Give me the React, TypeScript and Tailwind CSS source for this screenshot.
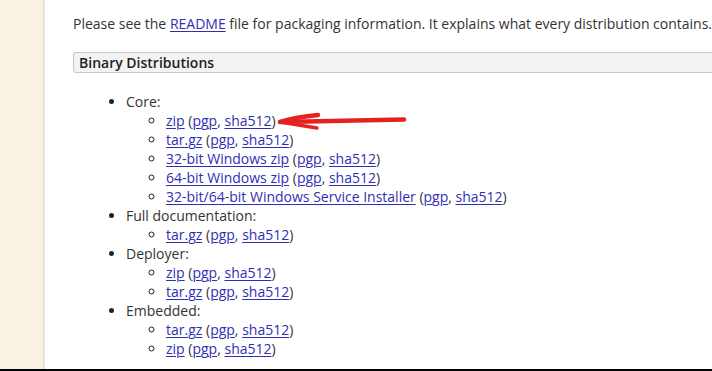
import React from 'react'

const L = ({ children }: { children: React.ReactNode }) => (
  <a href="#" className="text-[#2f2fb4] underline underline-offset-2 decoration-1">
    {children}
  </a>
)

function Sigs() {
  return (
    <>
      {' '}(<L>pgp</L>, <L>sha512</L>)
    </>
  )
}

const groups: { name: string; items: string[] }[] = [
  {
    name: 'Core:',
    items: ['zip', 'tar.gz', '32-bit Windows zip', '64-bit Windows zip', '32-bit/64-bit Windows Service Installer'],
  },
  { name: 'Full documentation:', items: ['tar.gz'] },
  { name: 'Deployer:', items: ['zip', 'tar.gz'] },
  { name: 'Embedded:', items: ['tar.gz', 'zip'] },
]

export default function App() {
  return (
    <div
      className="relative flex h-[371px] w-[712px] overflow-hidden bg-white text-[14px] text-[#333]"
      style={{ fontFamily: '"Open Sans", sans-serif' }}
    >
      <div className="w-[43px] shrink-0 bg-[#f8f1e4]" />
      <div className="w-[2px] shrink-0 bg-gradient-to-r from-[#d9d4cc] to-[#f3f3f3]" />
      <div className="flex-1 pl-[28px] pt-[13px]">
        <p className="leading-[22px] whitespace-nowrap">
          Please see the <L>README</L> file for packaging information. It explains what every distribution contains.
        </p>
        <div className="mt-[17px] -mr-[10px] h-[21px] rounded-l-[3px] border border-r-0 border-[#c8c8c8] bg-[#f3f3f3] pl-[5px] text-[14px] font-semibold leading-[19px] text-[#222]">
          Binary Distributions
        </div>
        <ul className="mt-[19px] list-disc pl-[53px] leading-[19px] marker:text-[#222]">
          {groups.map((g) => (
            <li key={g.name}>
              {g.name}
              <ul className="list-[circle] pl-[40px]">
                {g.items.map((it, i) => (
                  <li key={i}>
                    <L>{it}</L>
                    <Sigs />
                  </li>
                ))}
              </ul>
            </li>
          ))}
        </ul>
      </div>
      <div className="absolute bottom-0 left-0 h-[2px] w-full bg-black" />
      <svg className="absolute left-[274px] top-[108px]" width="138" height="26" viewBox="0 0 138 26">
        <path d="M8 14 L130 11.5" stroke="#e2231f" strokeWidth="4.5" strokeLinecap="round" fill="none" />
        <path d="M6 14 Q22 9 44 7" stroke="#e2231f" strokeWidth="4.5" strokeLinecap="round" fill="none" />
        <path d="M6 14 Q24 17 43 20" stroke="#e2231f" strokeWidth="3.5" strokeLinecap="round" fill="none" />
      </svg>
    </div>
  )
}
